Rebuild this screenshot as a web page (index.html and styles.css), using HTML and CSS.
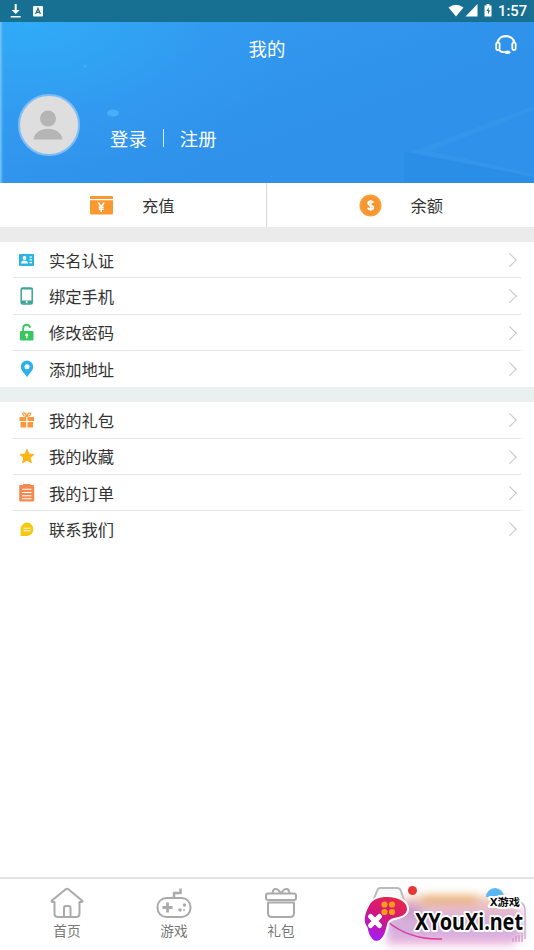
FILE: index.html
```html
<!DOCTYPE html>
<html lang="zh-CN">
<head>
<meta charset="utf-8">
<title>我的</title>
<link rel="stylesheet" href="styles.css">
</head>
<body>
<div class="app">
  <div class="status">
    <svg class="download" width="12" height="14" viewBox="0 0 12 14"><path d="M4.700 0h2v6h3L5.700 10 1.700 6h3zM.7 12h10v1.500H.7z" fill="#fff"/></svg>
    <svg class="badge" width="10" height="11" viewBox="0 0 10 11"><rect width="10" height="10.500" rx="1" fill="#f4ffff"/><path d="M2.600 8 5 2.500 7.400 8M3.500 6.300h3" fill="none" stroke="#3b6c78" stroke-width="1.300"/></svg>
    <svg class="signal" width="46" height="14" viewBox="0 0 46 14"><path d="M.5 3.500Q8 -2 15.500 3.500L8 12.500zM29.500 0v12.500H17.500z" fill="#fff"/><path d="M36.500 1.500h2V0h3v1.500h2v11h-7z" fill="#fff"/><path d="M41 3 38.500 7H40v3.500L42 6.200h-1.500z" fill="#176f92"/></svg>
    <span class="clock">1:57</span>
  </div>
  <header class="hero">
    <svg class="hero-art" width="534" height="161" viewBox="0 0 534 161" preserveAspectRatio="none">
      <defs><linearGradient id="edge"><stop offset="0" stop-color="#7ccafa"/><stop offset="1" stop-color="#45a9f5" stop-opacity="0"/></linearGradient></defs>
      <path d="M404 130 534 155v6H404z" fill="#2a8ce2" opacity=".6"/>
      <path d="M411 130 534 84v4L430 129l104 23v3z" fill="#3b9eee" opacity=".45"/>
      <ellipse cx="113" cy="91" rx="6" ry="3.500" fill="#45b0f8"/>
      <circle cx="85" cy="44" r="1.500" fill="#50b7f8" opacity=".6"/>
      <rect width="4" height="161" fill="url(#edge)"/>
    </svg>
    <h1>我的</h1>
    <svg class="headset" width="22" height="20" viewBox="0 0 22 20" fill="none" stroke="#fff"><path d="M2.700 8C3.200-1.100 18.600-1.100 19.200 8" stroke-width="2.200"/><rect x="1.200" y="7.500" width="3.400" height="7.500" rx="1.500" stroke-width="1.800"/><rect x="17.300" y="7.500" width="3.400" height="7.500" rx="1.500" stroke-width="1.800"/><path d="M4 14.500Q5.500 17.200 8.500 17.200h3" stroke-width="1.800"/><ellipse cx="12.500" cy="17.200" rx="3" ry="1.800" fill="#fff" stroke="none"/></svg>
    <div class="account">
      <div class="avatar"><svg width="30" height="30" viewBox="0 0 30 30" fill="#b5b5b5"><circle cx="14" cy="8.500" r="8"/><path d="M-.5 29.500C1 15 27 15 28.500 29.500z"/></svg></div>
      <div class="auth"><span>登录</span><i></i><span>注册</span></div>
    </div>
  </header>
  <div class="wallet">
    <div class="wallet-item recharge"><svg width="23" height="19" viewBox="0 0 23 19"><path d="M1 0h21q1 0 1 1v2H0V1q0-1 1-1zM0 4.200h23V17q0 1.500-1.500 1.500h-20Q0 18.500 0 17z" fill="#f9992f"/><path d="m8.300 6.500 2.900 4.500 2.900-4.500M11.200 11v5M8.700 11.300h5M8.700 13.300h5" fill="none" stroke="#fff" stroke-width="1.500"/></svg><span>充值</span></div>
    <div class="wallet-item balance"><svg width="23" height="23" viewBox="0 0 23 23"><circle cx="11.500" cy="11.500" r="11" fill="#f9a03a"/><circle cx="11.500" cy="11.500" r="9.500" fill="#f59630"/><path d="M14.300 8.800c-.6-1.700-5.200-1.900-5.200.4 0 2.500 5.200 1.700 5.200 4.300 0 2.300-4.900 2.300-5.500.2M11.600 6v11" fill="none" stroke="#fff" stroke-width="1.800"/></svg><span>余额</span></div>
  </div>
  <ul class="menu">
    <li><svg class="ico" viewBox="0 0 18 20"><rect x="1" y="4" width="15" height="12" rx="1" fill="#28b5e4"/><circle cx="6.500" cy="8" r="1.900" fill="#fff"/><path d="M3 13.500q.2-3 3.500-3t3.500 3zM11.500 6.500H14v1.200h-2.500zM11.500 9.300H14v1.200h-2.500zM11.500 12H14v1.200h-2.500z" fill="#fff"/></svg><span>实名认证</span><b></b></li>
    <li><svg class="ico" viewBox="0 0 18 20"><rect x="3.200" y="2" width="11" height="16" rx="1.500" fill="#fff" stroke="#3ba493" stroke-width="1.500"/><path d="M3 14.500h11.500v3H3zM3 2h11.500v1.500H3z" fill="#3ba493"/><circle cx="8.700" cy="16" r="1" fill="#fff"/></svg><span>绑定手机</span><b></b></li>
    <li><svg class="ico" viewBox="0 0 18 20"><rect x="2" y="9" width="13.500" height="9.500" rx="1" fill="#34c85d"/><path d="M5.200 10V6.500Q5.300 2.800 8.700 2.800q2.700 0 3.400 3" fill="none" stroke="#34c85d" stroke-width="1.900"/><path d="M8.700 11.500a1.500 1.500 0 0 1 .8 2.800v2H8v-2a1.500 1.500 0 0 1 .7-2.800" fill="#fff"/></svg><span>修改密码</span><b></b></li>
    <li><svg class="ico" viewBox="0 0 18 20"><path d="M9 18.300C7.300 14.700 2.800 12 2.800 7.700a6.200 6.200 0 0 1 12.400 0C15.200 12 10.700 14.700 9 18.300z" fill="#2cb1ee"/><circle cx="9" cy="7.800" r="2.500" fill="#fff"/></svg><span>添加地址</span><b></b></li>
  </ul>
  <ul class="menu second">
    <li><svg class="ico" viewBox="0 0 18 20"><path d="M1.500 7h6.700v4H1.500zM9.500 7H16v4H9.500zM2.500 12h5.700v5.500H2.500zM9.500 12H15v5.500H9.500z" fill="#fa973b"/><path d="M8.700 6.500C4 6 4 2.500 6 2.800 7.500 3 8.500 5 8.700 6.500 9 5 10 3 11.500 2.800c2-.3 2 3.200-2.800 3.700z" fill="none" stroke="#fa973b" stroke-width="1.200"/></svg><span>我的礼包</span><b></b></li>
    <li><svg class="ico" viewBox="0 0 18 20"><path d="m9 3.500 2 4.500 5 .5-3.800 3.300 1.200 5L9 14.300l-4.400 2.500 1.200-5L2 8.500 7 8z" fill="#fdb515" stroke="#fdb515" stroke-linejoin="round"/></svg><span>我的收藏</span><b></b></li>
    <li><svg class="ico" viewBox="0 0 18 20"><path d="M2.500 2H5V1h7.500v1H15q1.200 0 1.200 1.200V17q0 1.500-1.200 1.500H2.500Q1.200 18.500 1.200 17V3.200Q1.200 2 2.500 2z" fill="#f48a50"/><path d="M4 6.200h9.500M4 9.500h9.500M4 12.700h9.500M4 15.700h9.500" stroke="#fff" stroke-width="1.100"/></svg><span>我的订单</span><b></b></li>
    <li><svg class="ico" viewBox="0 0 18 20"><path d="M2.600 17V10a6.400 6.700 0 1 1 6.400 7z" fill="#f4c914"/><path d="M5.500 9.200h7M5.500 11.800h7" stroke="#fff" stroke-width="1.100" opacity=".85"/></svg><span>联系我们</span><b></b></li>
  </ul>
  <nav class="tabs">
    <div class="tab"><svg width="34" height="32" viewBox="0 0 34 32"><path d="M4.500 15v11.500q0 3.500 3.500 3.500h18q3.500 0 3.500-3.500V15H32q1-.6 0-1.500L18 2q-1-.7-2 0L2 13.500Q1 14.400 2 15zM14 30V21q0-2 2-2h2.500q2 0 2 2v9"/></svg><span>首页</span></div>
    <div class="tab"><svg width="36" height="32" viewBox="0 0 36 32"><rect x="1.500" y="11" width="33" height="19" rx="9"/><path d="M18 10V6h6.500V1.500" stroke-width="2.500"/><path d="M6.500 20.500h10M11.500 15.500v10" stroke-width="2.800"/><g fill="#aaa" stroke="none"><circle cx="28.500" cy="18" r="1.700"/><circle cx="24" cy="23" r="1.700"/><circle cx="28" cy="23" r="1"/></g></svg><span>游戏</span></div>
    <div class="tab"><svg width="34" height="32" viewBox="0 0 34 32"><rect x="2" y="6.500" width="30" height="6.500" rx="2"/><path d="M4 15.500h26V26q0 4-4 4H8q-4 0-4-4zM8.500 6q.5-4 3-4 3 0 5 4M17.500 6q2-4 5-4 2.500 0 3 4"/></svg><span>礼包</span></div>
  </nav>
  <svg class="mark" width="184" height="66" viewBox="0 0 184 66">
    <defs>
      <filter id="blur" x="-20%" y="-30%" width="140%" height="160%"><feGaussianBlur stdDeviation="4"/></filter>
      <linearGradient id="pad" x1=".7" y1="0" x2=".2" y2="1"><stop offset="0" stop-color="#e8264a"/><stop offset=".5" stop-color="#cf1684"/><stop offset="1" stop-color="#a21cff"/></linearGradient>
      <linearGradient id="haze" x1="0" y1="0" x2="0" y2="1"><stop offset="0" stop-color="#f2cfb0"/><stop offset=".35" stop-color="#e3b5d4"/><stop offset=".7" stop-color="#cdaee0"/><stop offset="1" stop-color="#f4b7dc"/></linearGradient>
    </defs>
    <path d="M23 17l4-10q1-3 3-3h17q3 0 4 3l4 12" fill="#f8f8fb" stroke="#bbb" stroke-width="2"/>
    <g filter="url(#blur)"><path d="M36 28 58 12h95l20 15v26l-12 8H37z" fill="url(#haze)"/><path d="M72 11h55v9H72z" fill="#e9b277"/><ellipse cx="60" cy="27" rx="12" ry="7" fill="#cb98cc"/></g>
    <path d="M136 13a9 9 0 0 1 18 0z" fill="#59b8f4"/>
    <circle cx="62.500" cy="6.500" r="4.500" fill="#e93636"/>
    <path d="M170 18q5 2 5 9v28" fill="none" stroke="#c9b4cb" stroke-width="1.500"/>
    <path d="M38 38q22 18 54 17" fill="none" stroke="#d93b9b" stroke-width="1.500"/>
    <path d="M163 58v-4m3 4v-6m3 6v-7m3 7v-9" stroke="#ce80b0" stroke-width="1"/>
    <path d="M20 20c4-5 9-7 17-7 12 0 20 5 20 12 0 6-7 8-13 9-8 2-6 6-9 14-3 9-10 12-14 5-4-6-2-9-5-12-3-6 0-14 4-21z" fill="url(#pad)" stroke="#fff" stroke-width="4" stroke-linejoin="round" paint-order="stroke"/>
    <g fill="#fa9c19"><circle cx="34.500" cy="20.500" r="3.100"/><circle cx="42" cy="20.500" r="3.100"/><circle cx="34.500" cy="28" r="3.100"/><circle cx="42" cy="28" r="3.100"/></g>
    <path d="m20.500 32.500 9 9m0-9-9 9" stroke="#fff" stroke-width="5" stroke-linecap="round"/>
    <text class="mark-small" x="140" y="22" textLength="30" lengthAdjust="spacingAndGlyphs">X游戏</text>
    <text class="mark-large" x="65" y="46" textLength="108" lengthAdjust="spacingAndGlyphs">XYouXi.net</text>
  </svg>
</div>
</body>
</html>
```
FILE: styles.css
```css
* { box-sizing: border-box; }
body { margin: 0; background: #fff; color: #333; font-family: "Noto Sans CJK SC", sans-serif; }
svg { display: block; flex: none; }
.app { position: relative; width: 534px; height: 950px; display: flex; flex-direction: column; overflow: hidden; }
.status { height: 22px; flex: none; display: flex; align-items: center; background: #176f92; padding: 0 8px 0 10px; }
.badge { margin-left: 11px; }
.signal { margin-left: auto; }
.clock { font: 500 14.8px/22px Roboto, sans-serif; color: #fff; width: 28px; margin-left: 4px; white-space: nowrap; }
.hero { position: relative; height: 161px; flex: none; color: #fff; background: radial-gradient(ellipse 270px 145px at 30px 0, #30abf6, rgba(48,160,244,.35) 65%, transparent), linear-gradient(160deg, #359cf1, #2f91ea 65%); }
.hero-art { position: absolute; left: 0; top: 0; }
.hero h1 { position: relative; margin: 0; padding-top: 13px; text-align: center; font-size: 18.4px; line-height: 27px; font-weight: 400; }
.headset { position: absolute; right: 17px; top: 13px; }
.account { position: relative; display: flex; margin: 32px 0 0 18px; }
.avatar { width: 62px; height: 62px; border: 2px solid #80bdf2; border-radius: 50%; background: #dedede; display: grid; place-items: center; }
.avatar svg { overflow: visible; }
.auth { display: flex; align-items: center; height: 28px; margin: 30px 0 0 30px; font-size: 18.4px; }
.auth i { width: 1px; height: 18px; margin: 0 16px; background: #d3eaff; }
.wallet { display: flex; height: 44px; flex: none; font-size: 16.3px; }
.wallet-item { flex: 1; display: flex; align-items: center; }
.recharge { border-right: 1px solid #d9d9d9; padding-left: 90px; gap: 29px; }
.balance { padding-left: 92px; gap: 29px; }
.menu { list-style: none; margin: 0; padding: 0 13px; border-top: 15px solid #ebebeb; font-size: 16.3px; }
.menu.second { border-top-color: #eaefef; }
.menu li { display: flex; align-items: center; height: 36.4px; border-bottom: 1px solid #e5e5e5; padding: 0 7px 0 5px; }
.menu li:last-child { border-bottom-color: transparent; }
.menu:not(.second) li:last-child { height: 36px; }
.ico { width: 18px; height: 20px; margin-right: 13px; }
.menu b { width: 9.500px; height: 9.500px; margin-left: auto; border: solid #c5c5c5; border-width: 1px 1px 0 0; transform: rotate(45deg); }
.tabs { display: flex; height: 73px; margin-top: auto; padding-left: 13.5px; border-top: 2px solid #e4e4e4; }
.tab { width: 107px; flex: none; display: flex; flex-direction: column; align-items: center; padding-top: 8px; color: #777; font-size: 13.7px; line-height: 23px; }
.tab svg { fill: none; stroke: #aaa; stroke-width: 2; stroke-linejoin: round; }
.mark { position: absolute; left: 350px; top: 884px; }
.mark text { fill: #080808; stroke: #fff; stroke-width: 4px; stroke-linejoin: round; paint-order: stroke; font-weight: 700; }
.mark-small { font-family: "Noto Sans", "Noto Sans CJK SC", sans-serif; font-size: 10.5px; }
.mark-large { font-family: "Noto Sans", sans-serif; font-size: 24px; }
```
